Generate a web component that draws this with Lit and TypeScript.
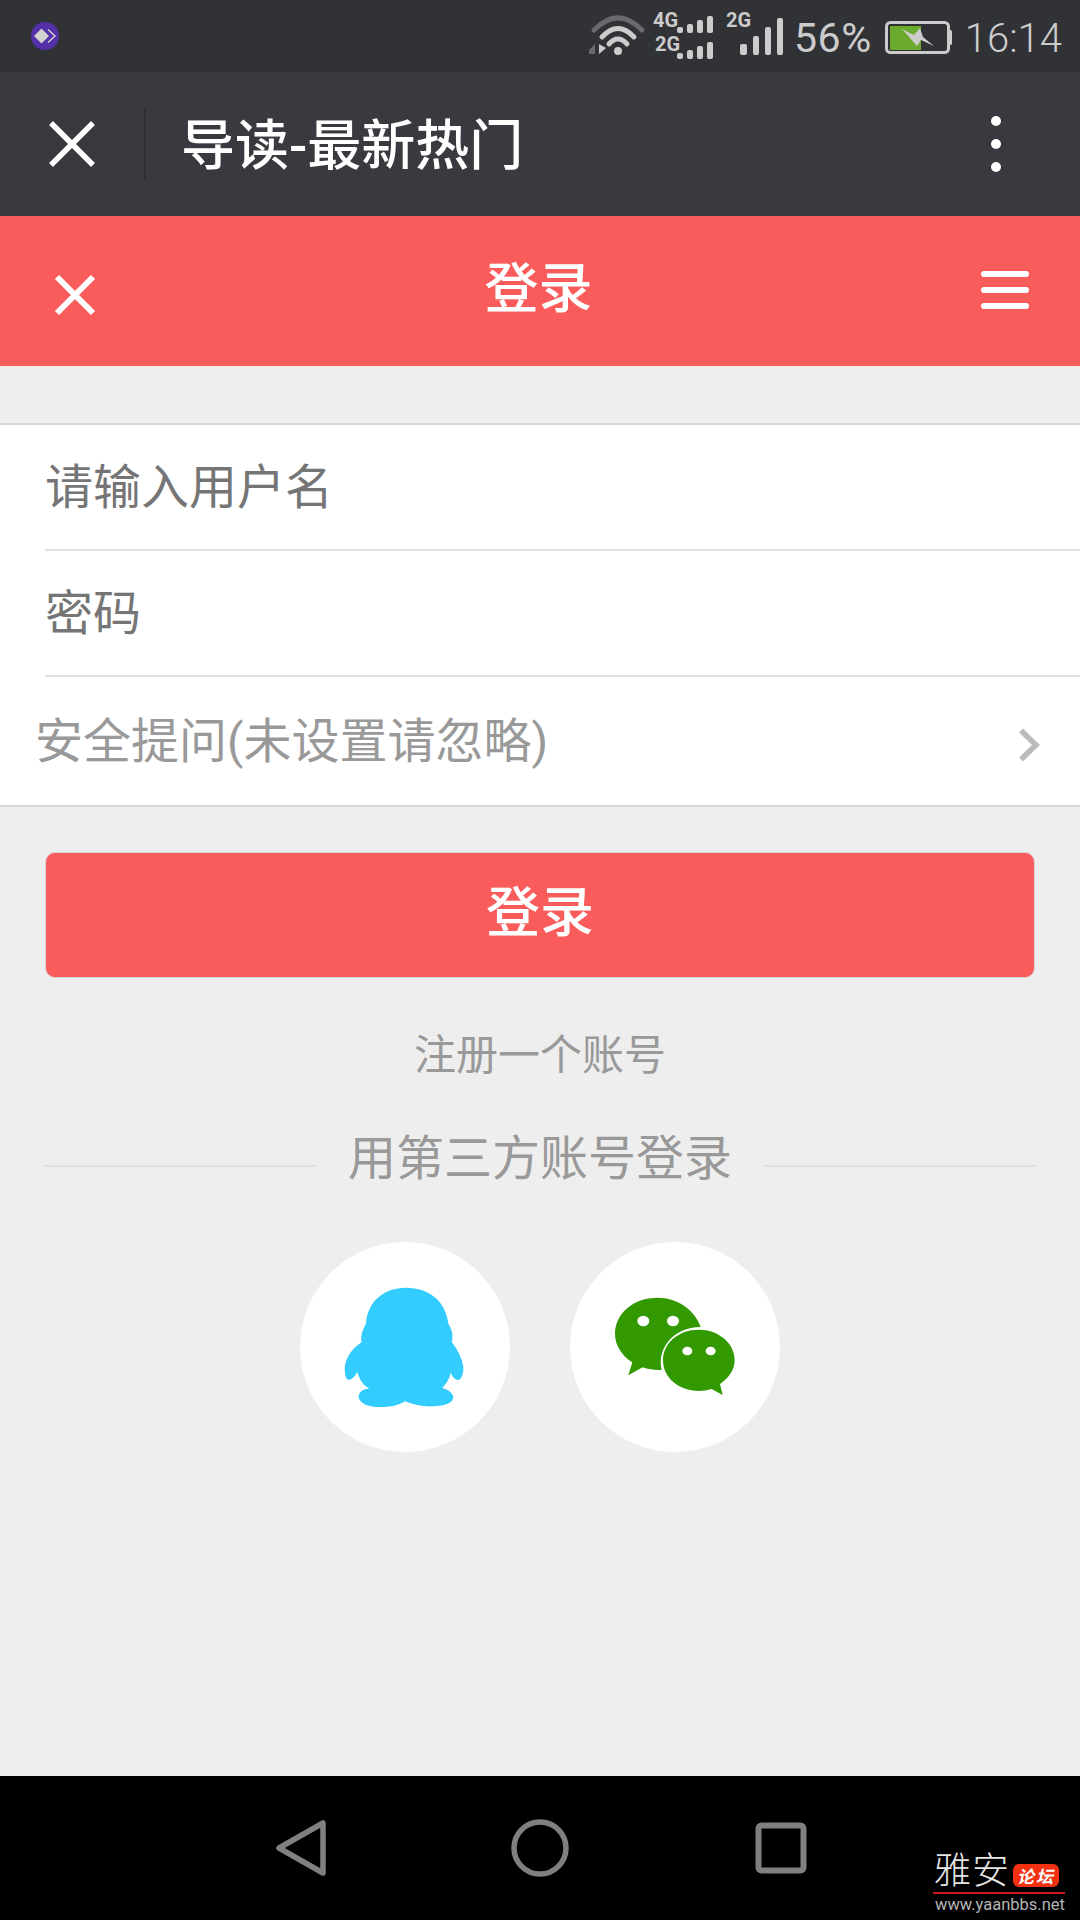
import { LitElement, html, css, svg } from "lit";
import { customElement } from "lit/decorators.js";

@customElement("app-root")
export class AppRoot extends LitElement {
  static styles = css`
    :host { display: block; width: 1080px; height: 1920px; font-family: Roboto, "Noto Sans CJK SC", sans-serif; }
    .page { width: 1080px; height: 1920px; display: flex; flex-direction: column; background: #eeeeee; position: relative; overflow: hidden; }
    svg { display: block; flex: none; }

    .status { height: 72px; flex: none; background: #313236; display: flex; align-items: center; padding: 0 18px 0 31px; box-sizing: border-box; color: #cccccc; }
    .status .spacer { flex: 1; }
    .pct { font-size: 41px; line-height: 72px; margin-left: 5px; margin-top: 3px; letter-spacing: .6px; }
    .batt { margin-left: 13px; margin-top: 3px; }
    .time { font-size: 40px; line-height: 72px; margin-left: 12px; margin-top: 5px; font-weight: 300; }
    .sig text { font: 700 20px Roboto, sans-serif; fill: #cccccc; }

    .wx { height: 144px; flex: none; background: #393a3f; display: flex; align-items: center; box-sizing: border-box; padding-left: 48px; color: #fff; }
    .wx .divider { width: 2px; height: 72px; background: #2e2f33; margin-left: 48px; }
    .wx .title { font-size: 54px; line-height: 60px; margin-left: 35px; flex: 1; margin-top: 6px; font-weight: 500; }
    .wx .more { margin-right: 79px; display: flex; flex-direction: column; gap: 13px; }
    .wx .more i { width: 10px; height: 10px; border-radius: 50%; background: #fff; display: block; }

    .red { height: 150px; flex: none; background: #f95c5b; display: flex; align-items: center; justify-content: space-between; box-sizing: border-box; padding: 0 51px 0 54px; color: #fff; }
    .red .t { font-size: 54px; line-height: 60px; margin-top: -2px; font-weight: 500; }
    .red .close { margin-top: 7px; }
    .burger { display: flex; flex-direction: column; gap: 10px; margin-top: -3px; }
    .burger i { display: block; width: 48px; height: 6px; border-radius: 3px; background: #fff; }

    main { flex: 1; padding-top: 57px; display: flex; flex-direction: column; min-height: 0; }
    .form { background: #fff; border-top: 2px solid #d6d6d6; border-bottom: 2px solid #d6d6d6; }
    .row { height: 124px; margin-left: 45px; border-bottom: 2px solid #e2e2e2; display: flex; align-items: center; font-size: 48px; color: #757575; }
    .row > span { margin-bottom: 8px; }
    .row.q { margin-left: 0; border-bottom: 0; height: 128px; padding: 0 40px 0 35px; color: #999999; justify-content: space-between; }
    .row.q svg { margin-top: 7px; }
    .btn { margin: 45px 45px 0; height: 126px; box-sizing: border-box; border: 1px solid #d5d5d5; border-radius: 10px; background: #f95c5b; color: #fff; font-size: 54px; font-weight: 500; display: flex; align-items: center; justify-content: center; padding-bottom: 14px; }
    .reg { margin-top: 51px; text-align: center; font-size: 42px; line-height: 54px; color: #999999; }
    .third { margin: 46px 45px 0; display: flex; align-items: center; font-size: 48px; line-height: 60px; color: #999999; gap: 31px; }
    .third b { flex: 1; height: 2px; background: #e0e0e0; margin-top: 13px; }
    .third span { flex: none; }
    .social { margin-top: 53px; display: flex; justify-content: center; gap: 60px; }
    .social div { width: 210px; height: 210px; border-radius: 50%; background: #fff; }

    nav { height: 144px; flex: none; background: #000; display: flex; align-items: center; box-sizing: border-box; padding-left: 275px; }
    nav .home { margin-left: 184px; }
    nav .sq { margin-left: 186px; }

    .mark { position: absolute; left: 933px; top: 1851px; width: 132px; color: #e6e6e6; }
    .mark .top { display: flex; align-items: center; height: 41px; }
    .mark .ya { font-size: 37px; line-height: 41px; font-weight: 300; width: 80px; white-space: nowrap; letter-spacing: 1px; padding-left: 1px; box-sizing: border-box; }
    .mark .badge { width: 46px; height: 23px; border-radius: 6px; background: #f3300f; color: #fff; font: italic 700 17px/23px "Noto Sans CJK SC", sans-serif; text-align: center; margin-top: 8px; letter-spacing: 2px; }
    .mark .line { height: 2px; background: #d01a1a; }
    .mark .url { font-size: 16.5px; line-height: 22px; color: #b5b5b5; white-space: nowrap; padding-left: 2px; }
  `;

  private sigIcon() {
    return html`<svg class="sig" width="205" height="72" viewBox="585 0 205 72">
      ${svg`
      <path d="M595 30 Q619 6 643 30" fill="none" stroke="#6a6a6c" stroke-width="5" stroke-linecap="round"/>
      <path d="M603 37 Q619 20 635 37" fill="none" stroke="#cccccc" stroke-width="5" stroke-linecap="round"/>
      <path d="M610 44 Q619 34 628 44" fill="none" stroke="#cccccc" stroke-width="5" stroke-linecap="round"/>
      <circle cx="619" cy="51" r="4" fill="#cccccc"/>
      <path d="M590 50 L596 44 V54 H590Z" fill="#6a6a6c"/>
      <path d="M600 44 V54 L607 48Z" fill="#cccccc"/>
      <text x="654" y="27">4G</text>
      <text x="656" y="51">2G</text>
      <text x="727" y="27">2G</text>
      <g fill="#cccccc">
        <rect x="678" y="27" width="6" height="6" rx="2"/><rect x="688" y="24" width="6" height="9" rx="2"/><rect x="698" y="20" width="6" height="13" rx="2"/><rect x="708" y="16" width="6" height="17" rx="2"/>
        <rect x="678" y="53" width="6" height="6" rx="2"/><rect x="688" y="50" width="6" height="9" rx="2"/><rect x="698" y="46" width="6" height="13" rx="2"/><rect x="708" y="42" width="6" height="17" rx="2"/>
        <rect x="741" y="44" width="7" height="11" rx="2"/><rect x="754" y="36" width="6" height="19" rx="2"/><rect x="766" y="27" width="6" height="28" rx="2"/><rect x="778" y="18" width="6" height="37" rx="2"/>
      </g>`}
    </svg>`;
  }

  render() {
    return html`<div class="page">
      <div class="status">
        <svg width="28" height="28" viewBox="0 0 28 28">
          <circle cx="14" cy="14" r="14" fill="#5430a8"/>
          <path d="M10.5 6.5 L18 14 L10.5 21.5 L3 14Z" fill="#d2d2d2"/>
          <path d="M17 7.5 L24 14 L17 20.5" fill="none" stroke="#d2d2d2" stroke-width="1.4"/>
        </svg>
        <div class="spacer"></div>
        ${this.sigIcon()}
        <span class="pct">56%</span>
        <svg class="batt" width="68" height="34" viewBox="0 0 68 34">
          <rect x="1.5" y="1.5" width="62" height="30" rx="4" fill="none" stroke="#cccccc" stroke-width="3"/>
          <rect x="5" y="5" width="31" height="24" fill="#6aaa2e"/>
          <rect x="64" y="9" width="3" height="15" rx="1.5" fill="#cccccc"/>
          <path d="M17 8 L29 14 L35 7 L38 16 L49 25 L36 19 L32 25 Z" fill="#cccccc"/>
        </svg>
        <span class="time">16:14</span>
      </div>

      <div class="wx">
        <svg width="48" height="48" viewBox="0 0 48 48"><path d="M3 3 L45 45 M45 3 L3 45" stroke="#fff" stroke-width="5.5" fill="none"/></svg>
        <div class="divider"></div>
        <div class="title">导读-最新热门</div>
        <div class="more"><i></i><i></i><i></i></div>
      </div>

      <div class="red">
        <svg class="close" width="42" height="42" viewBox="0 0 42 42"><path d="M3 3 L39 39 M39 3 L3 39" stroke="#fff" stroke-width="6" fill="none"/></svg>
        <div class="t">登录</div>
        <div class="burger"><i></i><i></i><i></i></div>
      </div>

      <main>
        <div class="form">
          <div class="row"><span>请输入用户名</span></div>
          <div class="row"><span>密码</span></div>
          <div class="row q">
            <span>安全提问(未设置请忽略)</span>
            <svg width="22" height="34" viewBox="0 0 22 34"><path d="M3 2.5 L18 17 L3 31.5" fill="none" stroke="#bbbbbb" stroke-width="5.5"/></svg>
          </div>
        </div>
        <div class="btn">登录</div>
        <div class="reg">注册一个账号</div>
        <div class="third"><b></b><span>用第三方账号登录</span><b></b></div>
        <div class="social">
          <div>
            <svg width="210" height="210" viewBox="60 65 630 630">
              <path fill="#33ccff" d="M378 202 C310 202 262 245 258 310 C250 325 240 345 245 365 C210 390 190 420 195 460 C198 485 215 485 232 455 C238 478 250 495 268 505 C245 505 232 520 237 535 C245 555 280 562 310 560 C340 560 358 553 375 543 C400 553 430 560 460 558 C495 556 520 548 520 530 C518 518 505 508 487 503 C500 490 508 475 512 458 C525 485 545 490 550 450 C552 425 535 390 515 365 C520 350 518 330 505 310 C498 245 450 202 378 202Z"/>
            </svg>
          </div>
          <div>
            <svg width="210" height="210" viewBox="870 65 630 630">
              <path fill="#339900" d="M1132 232 C1060 232 1005 280 1005 340 C1005 375 1025 405 1057 426 L1045 465 L1088 441 C1105 447 1125 450 1145 449 C1130 385 1180 320 1262 320 C1245 270 1195 232 1132 232Z"/>
              <path fill="#339900" d="M1256 328 C1196 328 1149 368 1149 420 C1149 472 1196 512 1256 512 C1270 512 1283 510 1295 506 L1328 524 L1320 491 C1347 473 1364 448 1364 420 C1364 368 1316 328 1256 328Z"/>
              <g fill="#fff">
                <ellipse cx="1090" cy="302" rx="18" ry="16"/><ellipse cx="1179" cy="302" rx="18" ry="16"/>
                <ellipse cx="1222" cy="392" rx="15" ry="13"/><ellipse cx="1292" cy="392" rx="15" ry="13"/>
              </g>
            </svg>
          </div>
        </div>
      </main>

      <nav>
        <svg width="52" height="58" viewBox="0 0 52 58"><path d="M48 4 V54 L4 29Z" fill="none" stroke="#808080" stroke-width="5.5" stroke-linejoin="round"/></svg>
        <svg class="home" width="58" height="58" viewBox="0 0 58 58"><circle cx="29" cy="29" r="26" fill="none" stroke="#808080" stroke-width="5.5"/></svg>
        <svg class="sq" width="52" height="52" viewBox="0 0 52 52"><rect x="3.5" y="3.5" width="45" height="45" rx="3" fill="none" stroke="#808080" stroke-width="6"/></svg>
      </nav>

      <div class="mark">
        <div class="top"><span class="ya">雅安</span><span class="badge">论坛</span></div>
        <div class="line"></div>
        <div class="url">www.yaanbbs.net</div>
      </div>
    </div>`;
  }
}
